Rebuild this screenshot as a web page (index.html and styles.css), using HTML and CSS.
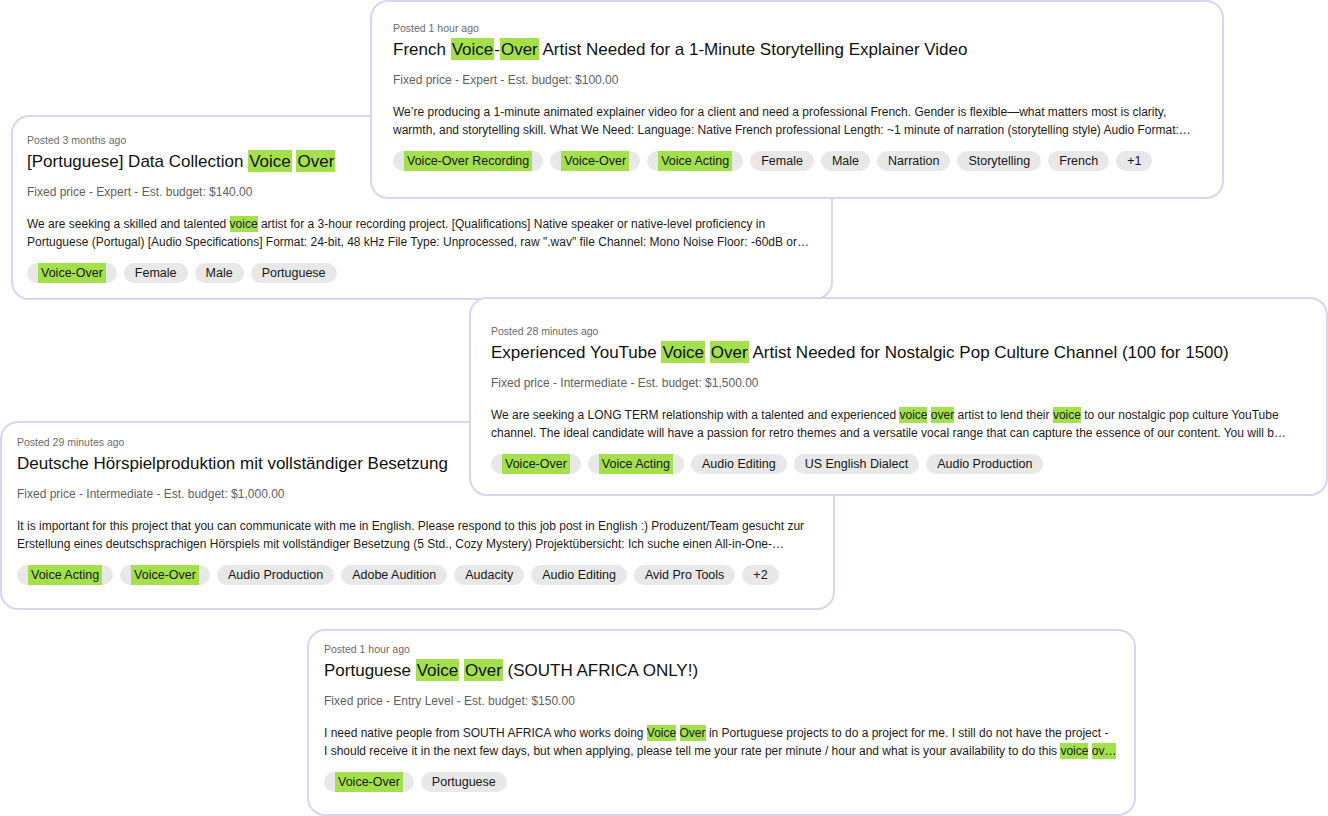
FILE: index.html
```html
<!DOCTYPE html>
<html lang="en">
<head>
<meta charset="utf-8">
<title>Voice Over Jobs</title>
<link rel="stylesheet" href="styles.css">
</head>
<body>
<main class="canvas">

  <article class="card card-b">
    <div class="posted">Posted 3 months ago</div>
    <h2 class="title">[Portuguese] Data Collection <mark class="hl">Voice</mark> <mark class="hl">Over</mark></h2>
    <div class="meta">Fixed price - Expert - Est. budget: $140.00</div>
    <p class="desc">
      <span class="line">We are seeking a skilled and talented <mark class="hl-s">voice</mark> artist for a 3-hour recording project. [Qualifications] Native speaker or native-level proficiency in</span>
      <span class="line">Portuguese (Portugal) [Audio Specifications] Format: 24-bit, 48 kHz File Type: Unprocessed, raw ".wav" file Channel: Mono Noise Floor: -60dB or…</span>
    </p>
    <ul class="tags">
      <li class="tag"><span class="tag-hl">Voice-Over</span></li>
      <li class="tag">Female</li>
      <li class="tag">Male</li>
      <li class="tag">Portuguese</li>
    </ul>
  </article>

  <article class="card card-a">
    <div class="posted">Posted 1 hour ago</div>
    <h2 class="title">French <mark class="hl">Voice</mark>-<mark class="hl">Over</mark> Artist Needed for a 1-Minute Storytelling Explainer Video</h2>
    <div class="meta">Fixed price - Expert - Est. budget: $100.00</div>
    <p class="desc">
      <span class="line">We’re producing a 1-minute animated explainer video for a client and need a professional French. Gender is flexible—what matters most is clarity,</span>
      <span class="line">warmth, and storytelling skill. What We Need: Language: Native French professional Length: ~1 minute of narration (storytelling style) Audio Format:…</span>
    </p>
    <ul class="tags">
      <li class="tag"><span class="tag-hl">Voice-Over Recording</span></li>
      <li class="tag"><span class="tag-hl">Voice-Over</span></li>
      <li class="tag"><span class="tag-hl">Voice Acting</span></li>
      <li class="tag">Female</li>
      <li class="tag">Male</li>
      <li class="tag">Narration</li>
      <li class="tag">Storytelling</li>
      <li class="tag">French</li>
      <li class="tag">+1</li>
    </ul>
  </article>

  <article class="card card-d">
    <div class="posted">Posted 29 minutes ago</div>
    <h2 class="title">Deutsche Hörspielproduktion mit vollständiger Besetzung</h2>
    <div class="meta">Fixed price - Intermediate - Est. budget: $1,000.00</div>
    <p class="desc">
      <span class="line">It is important for this project that you can communicate with me in English. Please respond to this job post in English :) Produzent/Team gesucht zur</span>
      <span class="line">Erstellung eines deutschsprachigen Hörspiels mit vollständiger Besetzung (5 Std., Cozy Mystery) Projektübersicht: Ich suche einen All-in-One-…</span>
    </p>
    <ul class="tags">
      <li class="tag"><span class="tag-hl">Voice Acting</span></li>
      <li class="tag"><span class="tag-hl">Voice-Over</span></li>
      <li class="tag">Audio Production</li>
      <li class="tag">Adobe Audition</li>
      <li class="tag">Audacity</li>
      <li class="tag">Audio Editing</li>
      <li class="tag">Avid Pro Tools</li>
      <li class="tag">+2</li>
    </ul>
  </article>

  <article class="card card-c">
    <div class="posted">Posted 28 minutes ago</div>
    <h2 class="title">Experienced YouTube <mark class="hl">Voice</mark> <mark class="hl">Over</mark> Artist Needed for Nostalgic Pop Culture Channel (100 for 1500)</h2>
    <div class="meta">Fixed price - Intermediate - Est. budget: $1,500.00</div>
    <p class="desc">
      <span class="line">We are seeking a LONG TERM relationship with a talented and experienced <mark class="hl-s">voice</mark> <mark class="hl-s">over</mark> artist to lend their <mark class="hl-s">voice</mark> to our nostalgic pop culture YouTube</span>
      <span class="line">channel. The ideal candidate will have a passion for retro themes and a versatile vocal range that can capture the essence of our content. You will b…</span>
    </p>
    <ul class="tags">
      <li class="tag"><span class="tag-hl">Voice-Over</span></li>
      <li class="tag"><span class="tag-hl">Voice Acting</span></li>
      <li class="tag">Audio Editing</li>
      <li class="tag">US English Dialect</li>
      <li class="tag">Audio Production</li>
    </ul>
  </article>

  <article class="card card-e">
    <div class="posted">Posted 1 hour ago</div>
    <h2 class="title">Portuguese <mark class="hl">Voice</mark> <mark class="hl">Over</mark> (SOUTH AFRICA ONLY!)</h2>
    <div class="meta">Fixed price - Entry Level - Est. budget: $150.00</div>
    <p class="desc">
      <span class="line">I need native people from SOUTH AFRICA who works doing <mark class="hl-s">Voice</mark> <mark class="hl-s">Over</mark> in Portuguese projects to do a project for me. I still do not have the project -</span>
      <span class="line">I should receive it in the next few days, but when applying, please tell me your rate per minute / hour and what is your availability to do this <mark class="hl-s">voice</mark> <mark class="hl-s">ov…</mark></span>
    </p>
    <ul class="tags">
      <li class="tag"><span class="tag-hl">Voice-Over</span></li>
      <li class="tag">Portuguese</li>
    </ul>
  </article>

</main>
</body>
</html>
```
FILE: styles.css
```css
* { box-sizing: border-box; }

html, body {
  margin: 0;
  padding: 0;
  background: #ffffff;
}

body {
  font-family: "Liberation Sans", Arial, sans-serif;
  color: #141414;
}

.canvas {
  position: relative;
  width: 1328px;
  height: 816px;
  overflow: hidden;
}

.card {
  position: absolute;
  background: #ffffff;
  border: 2px solid #d8d5f3;
  border-radius: 18px;
  display: flex;
  flex-direction: column;
}

.card-a { left: 370px; top: 0; width: 854px; padding: 19px 21px 26px; z-index: 2; }
.card-b { left: 11px; top: 115px; width: 822px; padding: 16px 14px 15px; z-index: 1; }
.card-c { left: 469px; top: 297px; width: 859px; padding: 25px 20px 20px; z-index: 4; }
.card-d { left: 0; top: 421px; width: 835px; padding: 12px 15px 23px; z-index: 3; }
.card-e { left: 307px; top: 629px; width: 829px; padding: 11px 15px 22px; z-index: 5; }

.posted {
  font-size: 10.5px;
  line-height: 14px;
  height: 14px;
  color: #6b6b6b;
  white-space: nowrap;
}

.title {
  margin: 3px 0 0;
  font-size: 17px;
  font-weight: 400;
  line-height: 24px;
  height: 24px;
  color: #111111;
  white-space: nowrap;
}

.hl {
  background: #a4e04c;
  color: inherit;
  padding: 2px 1px 1px;
}

.meta {
  margin-top: 9px;
  font-size: 12px;
  line-height: 18px;
  color: #5f5f5f;
  white-space: nowrap;
}

.desc {
  margin: 14px 0 0;
  font-size: 12px;
  line-height: 18px;
  color: #1c1c1c;
}

.line {
  display: block;
  white-space: nowrap;
}

.hl-s {
  background: #a4e04c;
  color: inherit;
  padding: 1px 0;
}

.tags {
  list-style: none;
  margin: 12px 0 0;
  padding: 0;
  display: flex;
  gap: 7px;
}

.tag {
  height: 20px;
  line-height: 20px;
  padding: 0 11px;
  border-radius: 10px;
  background: #e8e8e8;
  font-size: 12.5px;
  color: #161616;
  white-space: nowrap;
}

.tag-hl {
  display: inline-block;
  height: 20px;
  background: #a4e04c;
  padding: 0 3px;
}
```
